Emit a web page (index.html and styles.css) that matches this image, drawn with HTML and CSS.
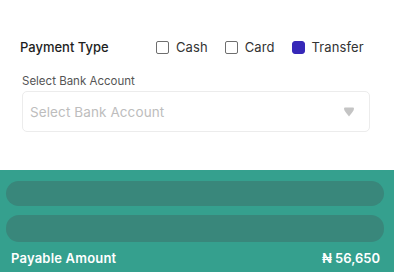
FILE: index.html
```html
<!DOCTYPE html>
<html lang="en">
<head>
  <meta charset="UTF-8" />
  <title>Payment</title>
  <link rel="stylesheet" href="styles.css">
</head>
<body>
  <div class="payment">
    <div class="type-row">
      <span class="type-title">Payment Type</span>
      <div class="options">
        <label class="option"><span class="box"></span>Cash</label>
        <label class="option"><span class="box"></span>Card</label>
        <label class="option"><span class="box checked"></span>Transfer</label>
      </div>
    </div>

    <div class="field">
      <div class="field-label">Select Bank Account</div>
      <div class="select">
        <span class="placeholder">Select Bank Account</span>
        <svg class="arrow" width="12" height="10" viewBox="0 0 12 10">
          <path d="M1 1.5 Q1 0.5 2 0.5 H10 Q11 0.5 11 1.5 Q11 3 9.5 5 L6 9.5 L2.5 5 Q1 3 1 1.5 Z" fill="#c4c4c4"/>
        </svg>
      </div>
    </div>
  </div>

  <div class="summary">
    <div class="bar"></div>
    <div class="bar tall"></div>
    <div class="total-row">
      <span class="total-label">Payable Amount</span>
      <span class="total-value">₦ 56,650</span>
    </div>
  </div>
</body>
</html>
```

FILE: styles.css
```css
* {
  box-sizing: border-box;
  margin: 0;
  padding: 0;
}

body {
  font-family: 'Inter', 'Noto Sans', sans-serif;
  background: #fff;
  color: #222;
  width: 394px;
  height: 272px;
  overflow: hidden;
}

.payment {
  padding: 38px 24px 0 20px;
  height: 170px;
}

.type-row {
  display: flex;
  align-items: center;
  height: 18px;
}

.type-title {
  font-size: 13px;
  font-weight: 500;
  width: 136px;
  color: #1e1e1e;
}

.options {
  display: flex;
  gap: 17px;
}

.option {
  display: flex;
  align-items: center;
  gap: 7px;
  font-size: 13px;
  color: #333;
  letter-spacing: 0.1px;
}

.box {
  width: 13px;
  height: 13px;
  border: 1px solid #6e6e6e;
  border-radius: 2px;
}

.box.checked {
  background: #3628b8;
  border-color: #3628b8;
  border-radius: 3px;
}

.field {
  margin-top: 18px;
  padding-left: 2px;
}

.field-label {
  font-size: 11.5px;
  color: #555;
  margin-bottom: 3px;
}

.select {
  display: flex;
  align-items: center;
  justify-content: space-between;
  width: 348px;
  height: 41px;
  border: 1px solid #ececec;
  border-radius: 5px;
  padding: 0 14px 0 7px;
}

.placeholder {
  font-size: 13.5px;
  color: #bdbdbd;
  letter-spacing: 0.1px;
}

.summary {
  background: #35a08e;
  height: 102px;
  padding: 11px 10px 0 6px;
}

.bar {
  height: 25px;
  border-radius: 13px;
  background: #39877b;
  margin-bottom: 9px;
}

.bar.tall {
  height: 27px;
}

.total-row {
  display: flex;
  justify-content: space-between;
  align-items: center;
  color: #fff;
  font-weight: 600;
  font-size: 13px;
  padding: 0 4px 0 5px;
  margin-top: -1px;
}

.total-label {
  letter-spacing: 0.2px;
}
```
